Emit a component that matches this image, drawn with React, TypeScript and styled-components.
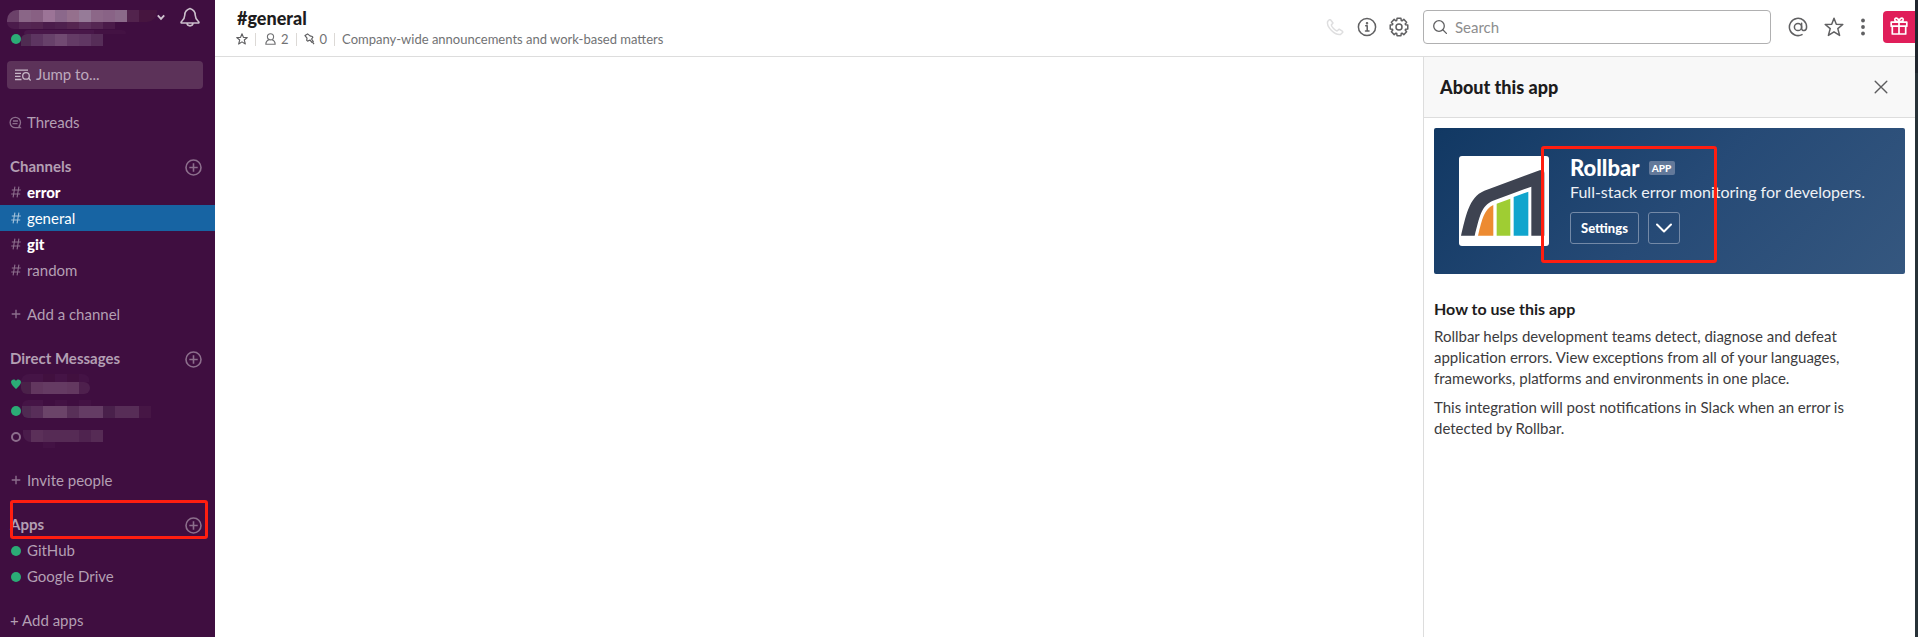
import React from "react";
import styled, { createGlobalStyle, css } from "styled-components";

const GlobalStyle = createGlobalStyle`
  *, *::before, *::after { box-sizing: border-box; }
  body {
    margin: 0;
    font-family: Lato, "Liberation Sans", sans-serif;
    font-size: 15px;
    color: #1d1c1d;
    background: #fff;
    overflow: hidden;
  }
  svg { display: block; flex: none; }
  h1, h2, h3, p { margin: 0; }
  button { font-family: inherit; margin: 0; padding: 0; background: none; border: 0; }
`;

const Page = styled.div`
  display: grid;
  grid-template-columns: 215px 1fr 3px;
  height: 637px;
  width: 1918px;
`;

/* ---------- sidebar ---------- */

const Sidebar = styled.aside`
  position: relative;
  background: #3f0e40;
  color: #b39fb3;
  overflow: hidden;
`;

const TeamHeader = styled.div`
  display: flex;
  height: 61px;
  padding: 7px 0 0 7px;
`;

const TeamText = styled.div`
  width: 150px;
  padding-top: 3px;
`;

const UserLine = styled.div`
  display: flex;
  padding-left: 4px;
`;

const BellIcon = styled.svg`
  margin-left: 15px;
`;

const Chevron = styled.svg`
  margin-top: 7px;
`;

const Mosaic = styled.div<{ $round?: string; $h: number; $indent: number }>`
  display: flex;
  height: ${(p) => p.$h}px;
  margin-left: ${(p) => p.$indent}px;
  border-radius: ${(p) => p.$round ?? "0"};
  overflow: hidden;
`;

const Cell = styled.span<{ $w: number; $c: string }>`
  width: ${(p) => p.$w}px;
  background: ${(p) => p.$c};
  flex: none;
`;

const MosaicStack = styled.div<{ $top: number }>`
  align-self: flex-start;
  margin-top: ${(p) => p.$top}px;
`;

const JumpTo = styled.div`
  display: flex;
  align-items: center;
  gap: 5px;
  width: 196px;
  height: 28px;
  margin-left: 7px;
  padding-left: 8px;
  border-radius: 4px;
  background: #5c3259;
  color: #bda9bd;
  line-height: 26px;
`;

const JumpLabel = styled.span`
  height: 28px;
`;

const Sections = styled.nav`
  display: flex;
  flex-direction: column;
  gap: 18px;
  padding-top: 20px;
`;

const Row = styled.div<{ $active?: boolean; $unread?: boolean }>`
  display: flex;
  align-items: center;
  height: 26px;
  padding: 0 13px 0 10px;
  line-height: 26px;
  white-space: pre;
  ${(p) => p.$active && css`background: #1764a3; color: #fff;`}
  ${(p) => p.$unread && css`color: #fff; font-weight: 900;`}
`;

const Prefix = styled.span<{ $active?: boolean; $w?: number }>`
  display: flex;
  flex: none;
  align-items: center;
  width: ${(p) => p.$w ?? 17}px;
  padding-left: 1px;
  color: ${(p) => (p.$active ? "#a2c1da" : "#8c6e8c")};
`;

const ThreadsIcon = styled.svg`
  margin-left: -2px;
`;

const SectionTitle = styled.span`
  flex: 1;
  font-weight: 700;
`;

const PlusIcon = styled.svg`
  margin-top: 3px;
`;

const Dot = styled.span<{ $away?: boolean; $top?: number }>`
  flex: none;
  width: 10px;
  height: 10px;
  margin-top: ${(p) => p.$top ?? 2}px;
  border-radius: 50%;
  ${(p) => (p.$away ? css`border: 2px solid #8c6e8c;` : css`background: #2bac76;`)}
`;

const Highlight = styled.div<{ $x: number; $y: number; $w: number; $h: number }>`
  position: absolute;
  left: ${(p) => p.$x}px;
  top: ${(p) => p.$y}px;
  width: ${(p) => p.$w}px;
  height: ${(p) => p.$h}px;
  border: 3px solid #ff1e10;
  border-radius: 3px;
  pointer-events: none;
`;

/* ---------- main ---------- */

const Main = styled.main`
  display: flex;
  flex-direction: column;
  min-width: 0;
`;

const TopBar = styled.header`
  display: flex;
  height: 57px;
  border-bottom: 1px solid #dddddd;
`;

const ChannelInfo = styled.div`
  flex: 1;
  padding: 7px 0 0 22px;
`;

const ChannelName = styled.h1`
  font-size: 18px;
  font-weight: 900;
  line-height: 22px;
  height: 22px;
`;

const Meta = styled.div`
  display: flex;
  align-items: center;
  height: 20px;
  margin-left: -1px;
  font-size: 13px;
  color: #717274;
  line-height: 20px;
`;

const MetaItem = styled.span`
  display: flex;
  align-items: center;
  gap: 5px;
  & + & {
    margin-left: 7px;
    padding-left: 8px;
    background: linear-gradient(#dcd9d6, #dcd9d6) left center / 1px 13px no-repeat;
  }
  &:nth-child(2) { padding-left: 9px; }
`;

const ToolGroup = styled.div<{ $gap: number; $right: number }>`
  display: flex;
  align-items: center;
  height: 54px;
  gap: ${(p) => p.$gap}px;
  margin-right: ${(p) => p.$right}px;
`;

const SearchBox = styled.div`
  display: flex;
  align-items: center;
  gap: 8px;
  width: 348px;
  height: 34px;
  margin: 10px 17px 0 0;
  padding-left: 9px;
  border: 1px solid #b0b0b1;
  border-radius: 4px;
  color: #8d8d8e;
`;

const GiftButton = styled.button`
  display: flex;
  align-items: center;
  justify-content: center;
  width: 32px;
  height: 32px;
  margin-top: 11px;
  padding-bottom: 2px;
  border-radius: 4px 0 0 4px;
  background: #e01e5a;
`;

const Content = styled.div`
  display: flex;
  flex: 1;
`;

const Messages = styled.section`
  flex: 1;
`;

const Panel = styled.aside`
  width: 492px;
  border-left: 1px solid #dddddd;
`;

const PanelHeader = styled.div`
  display: flex;
  align-items: center;
  justify-content: space-between;
  height: 61px;
  padding: 0 27px 0 16px;
  background: #f8f8f8;
  border-bottom: 1px solid #dddddd;
`;

const PanelTitle = styled.h2`
  font-size: 18px;
  font-weight: 900;
  line-height: 24px;
`;

const AppCard = styled.div`
  position: relative;
  display: flex;
  width: 471px;
  height: 146px;
  margin: 10px 0 0 10px;
  padding: 28px 0 0 25px;
  border-radius: 2px;
  background: linear-gradient(135deg, #113863 0%, #264a76 52%, #35577f 100%);
  color: #fff;
`;

const AppLogo = styled.svg`
  border-radius: 3px;
`;

const AppInfo = styled.div`
  margin: -1px 0 0 21px;
`;

const AppNameRow = styled.div`
  display: flex;
  align-items: center;
  height: 25px;
  gap: 9px;
`;

const AppName = styled.h3`
  font-size: 22px;
  font-weight: 900;
  line-height: 25px;
`;

const Badge = styled.span`
  width: 26px;
  height: 14px;
  border-radius: 2px;
  background: #63799a;
  font-size: 10px;
  font-weight: 900;
  line-height: 15px;
  text-align: center;
`;

const Tagline = styled.p`
  height: 24px;
  font-size: 16px;
  line-height: 24px;
  white-space: nowrap;
  color: #eef1f5;
`;

const Actions = styled.div`
  display: flex;
  gap: 9px;
  margin-top: 8px;
`;

const OutlineButton = styled.button<{ $w: number }>`
  display: flex;
  align-items: center;
  justify-content: center;
  width: ${(p) => p.$w}px;
  height: 32px;
  border: 1px solid #7389a7;
  border-radius: 3px;
  color: #fff;
  font-size: 13px;
  font-weight: 900;
`;

const HowTo = styled.div`
  padding: 23px 0 0 10px;
`;

const HowToTitle = styled.h3`
  font-size: 16px;
  font-weight: 700;
  line-height: 24px;
`;

const Paragraph = styled.p`
  margin-top: 5px;
  margin-bottom: 8px;
  line-height: 21px;
  color: #3c3b3d;
  white-space: nowrap;
  & + & { margin-top: 0; }
`;

const Edge = styled.div`
  background: linear-gradient(#20262e 73px, #283238 73px);
`;

/* ---------- shared pieces ---------- */

const ToolIcon = ({ size = 20, color = "#606062", w = 1.5, children }: { size?: number; color?: string; w?: number; children: React.ReactNode }) => (
  <svg width={size} height={size} viewBox="0 0 20 20" fill="none" stroke={color} strokeWidth={w} strokeLinejoin="round" strokeLinecap="round">
    {children}
  </svg>
);

const starPath = "M10 1.300 12.300 7.200 18.800 7.500 13.800 11.600 15.600 18.400 10 14.800 4.400 18.400 6.200 11.600 1.200 7.500 7.700 7.200Z";

const gearPath = (() => {
  const points: string[] = [];
  for (let i = 0; i < 8; i++) {
    const a = (i * Math.PI) / 4;
    [[-0.22, 9], [0.22, 9], [0.33, 6.9], [0.455, 6.9]].forEach(([d, r]) => {
      points.push(`${(10 + r * Math.sin(a + d)).toFixed(2)} ${(10 - r * Math.cos(a + d)).toFixed(2)}`);
    });
  }
  return `M${points.join("L")}Z`;
})();

const SmallPlus = () => (
  <svg width="10" height="10" viewBox="0 0 10 10" stroke="#8c6e8c" strokeWidth="1.4">
    <path d="M5 .7v8.600M.7 5h8.600" />
  </svg>
);

type Cells = [number, string][];

const Redacted = ({ cells, round, h = 12, indent = 0 }: { cells: Cells; round?: string; h?: number; indent?: number }) => (
  <Mosaic $round={round} $h={h} $indent={indent}>
    {cells.map(([w, c], i) => (
      <Cell key={i} $w={w} $c={c} />
    ))}
  </Mosaic>
);

const ChannelRow = ({ name, active, unread }: { name: string; active?: boolean; unread?: boolean }) => (
  <Row $active={active} $unread={unread}>
    <Prefix $active={active}>
      <svg width="10" height="12" viewBox="0 0 10 12" fill="none" stroke="currentColor" strokeWidth="1.100">
        <path d="M3.900.7 2.100 11.300M7.900.7 6.100 11.300M.8 4h9M.2 8h9" />
      </svg>
    </Prefix>
    {name}
  </Row>
);

const Section = ({ title }: { title: string }) => (
  <Row>
    <SectionTitle>{title}</SectionTitle>
    <PlusIcon width="17" height="17" viewBox="0 0 17 17" fill="none" stroke="#8c6e8c" strokeWidth="1.6">
      <circle cx="8.500" cy="8.500" r="7.500" />
      <path d="M8.500 4.300v8.400M4.300 8.500h8.400" />
    </PlusIcon>
  </Row>
);

export default function App() {
  return (
    <>
      <GlobalStyle />
      <Page>
        <Sidebar>
          <TeamHeader>
            <TeamText>
              <Redacted
                round="10px 0 10px 0"
                cells={[[12, "#6b4169"], [12, "#8a6687"], [12, "#886083"], [12, "#9c7497"], [12, "#8b688b"], [12, "#95708d"], [12, "#967b98"], [12, "#8c6788"], [12, "#896386"], [12, "#8b6a8a"], [12, "#52234d"], [18, "#46153f"]]}
              />
              <Redacted
                h={7}
                round="0 0 8px 12px"
                cells={[[12, "#4b1b4b"], [12, "#542653"], [12, "#532450"], [12, "#4b1c4b"], [12, "#4e204e"], [12, "#552550"], [12, "#5c2f5b"], [12, "#552753"], [12, "#4a1a49"]]}
              />
              <UserLine>
                <Dot $top={5} />
                <MosaicStack $top={1}>
                  <Redacted h={4} indent={3} round="6px 6px 0 0" cells={[[70, "#481749"], [32, "#431243"]]} />
                  <Redacted round="6px 0 0 0" cells={[[10, "#4f2b52"], [12, "#5d3561"], [12, "#67416a"], [12, "#714a72"], [12, "#643b66"], [12, "#603763"], [12, "#562d58"]]} />
                </MosaicStack>
              </UserLine>
            </TeamText>
            <Chevron width="8" height="7" viewBox="0 0 8 7" fill="none" stroke="#cfc3cf" strokeWidth="1.900">
              <path d="M.8 1.300 4 4.800 7.200 1.300" />
            </Chevron>
            <BellIcon width="20" height="20" viewBox="0 0 20 20" fill="none" stroke="#cbbfcb" strokeWidth="1.600" strokeLinejoin="round">
              <path d="M10 1.500C7.500 2.300 4.800 4 4.800 8c0 3.600-1 4.400-3.500 6.800-.5.500-.2 1.200.5 1.200h16.400c.7 0 1-.7.5-1.200C16.200 12.400 15.200 11.600 15.200 8c0-4-2.700-5.700-5.200-6.500zM7 16.300c.3 3.400 5.700 3.400 6 0" />
            </BellIcon>
          </TeamHeader>
          <JumpTo>
            <svg width="16" height="12" viewBox="0 0 16 12" fill="none" stroke="#c8b8c8" strokeWidth="1.300">
              <path d="M0 1.200h13M0 4.300h6M0 7.400h5.500M0 10.500h6.500M13.500 9 15.600 11.500" />
              <circle cx="11" cy="6.900" r="3.300" />
            </svg>
            <JumpLabel>Jump to...</JumpLabel>
          </JumpTo>
          <Sections>
            <Row>
              <Prefix>
                <ThreadsIcon width="13" height="13" viewBox="0 0 13 13" fill="none" stroke="#8c6e8c" strokeWidth="1.300">
                  <path d="M11.300 11.700H6.300A5.200 5.200 0 1 1 11.500 6.500c0 1.700-.5 2.600-1.500 3.700zM4 5h5M3.500 7.700h5" />
                </ThreadsIcon>
              </Prefix>
              Threads
            </Row>
            <div>
              <Section title="Channels" />
              <ChannelRow name="error" unread />
              <ChannelRow name="general" active />
              <ChannelRow name="git" unread />
              <ChannelRow name="random" />
            </div>
            <Row><Prefix><SmallPlus /></Prefix>Add a channel</Row>
            <div>
              <Section title="Direct Messages" />
              <Row>
                <Prefix $w={11}>
                  <svg width="10" height="10" viewBox="0 0 10 10" fill="#2bac76">
                    <path d="M5 10C2.500 7.800 0 5.700 0 3.100 0 .2 3.800-.4 5 1.900 6.200-.4 10 .2 10 3.100 10 5.700 7.500 7.800 5 10z" />
                  </svg>
                </Prefix>
                <MosaicStack $top={3}>
                  <Redacted h={8} round="10px 10px 0 0" cells={[[22, "#451446"], [12, "#41103f"], [12, "#451446"], [12, "#41103f"], [10, "#441345"]]} />
                  <Redacted round="0 6px 6px 6px" cells={[[10, "#4a2149"], [12, "#62375f"], [24, "#653b63"], [12, "#633860"], [11, "#4e204d"]]} />
                </MosaicStack>
              </Row>
              <Row>
                <Prefix $w={12}><Dot /></Prefix>
                <MosaicStack $top={3}>
                  <Redacted h={6} round="6px 0 0 0" cells={[[21, "#451446"], [12, "#3f0e40"], [12, "#431244"], [12, "#3f0e40"], [12, "#431244"]]} />
                  <Redacted round="0 0 0 6px" cells={[[9, "#4f2a52"], [12, "#582e59"], [24, "#6b4469"], [12, "#583058"], [24, "#643c64"], [12, "#49204b"], [24, "#572d57"], [12, "#461645"]]} />
                </MosaicStack>
              </Row>
              <Row>
                <Prefix $w={13}><Dot $away /></Prefix>
                <MosaicStack $top={7}>
                  <Redacted round="0 0 0 8px" cells={[[8, "#4a1c4b"], [12, "#5b3059"], [36, "#562b55"], [12, "#4f234f"], [12, "#562b55"]]} />
                  <Redacted h={6} indent={20} cells={[[12, "#431244"]]} />
                </MosaicStack>
              </Row>
            </div>
            <Row><Prefix><SmallPlus /></Prefix>Invite people</Row>
            <div>
              <Section title="Apps" />
              <Row><Prefix><Dot /></Prefix>GitHub</Row>
              <Row><Prefix><Dot /></Prefix>Google Drive</Row>
            </div>
            <Row>+ Add apps</Row>
          </Sections>
          <Highlight $x={10} $y={500} $w={198} $h={39} />
        </Sidebar>
        <Main>
          <TopBar>
            <ChannelInfo>
              <ChannelName>#general</ChannelName>
              <Meta>
                <MetaItem>
                  <ToolIcon size={12} w={1.9}><path d={starPath} /></ToolIcon>
                </MetaItem>
                <MetaItem>
                  <svg width="12" height="12" viewBox="0 0 12 12" fill="none" stroke="#717274" strokeWidth="1.100" strokeLinejoin="round">
                    <circle cx="6.500" cy="3.800" r="3.100" />
                    <path d="M4.800 6.800C2.800 7.600 1.800 9 1.800 11.300h9.400C11.200 9 10.200 7.600 8.200 6.800" />
                  </svg>
                  <span>2</span>
                </MetaItem>
                <MetaItem>
                  <svg width="11" height="12" viewBox="0 0 11 12" fill="none" stroke="#606062" strokeWidth="1.200" strokeLinejoin="round">
                    <path d="M3.600.9 6 2.900 8.300 3.500 8.800 4.400 7.600 6 9.300 8.500 7.900 9.300 6 7 3.600 8.100 2.700 7.400 3 5.200 1 2.600ZM8.400 8.900 10 11.200" />
                  </svg>
                  <span>0</span>
                </MetaItem>
                <MetaItem>Company-wide announcements and work-based matters</MetaItem>
              </Meta>
            </ChannelInfo>
            <ToolGroup $gap={12} $right={14}>
              <ToolIcon color="#dededf">
                <path d="M4.300 2.800 2.600 4.500C1.200 9.500 9.500 18.500 15.500 17.500L17.800 15.300 17.600 14.300 14.200 12.200 12 14C10 13.500 6.600 10 6.300 8L8 6 5.500 2.800Z" />
              </ToolIcon>
              <ToolIcon>
                <circle cx="10" cy="10" r="8.600" />
                <path d="M8.700 8.700H10.200V14M8.500 14H12" />
                <circle cx="10" cy="6.200" r=".5" fill="#606062" />
              </ToolIcon>
              <ToolIcon>
                <path d={gearPath} />
                <circle cx="10" cy="10" r="3" />
              </ToolIcon>
            </ToolGroup>
            <SearchBox>
              <svg width="14" height="14" viewBox="0 0 14 14" fill="none" stroke="#606062" strokeWidth="1.300" strokeLinecap="round">
                <circle cx="6" cy="6" r="5.300" />
                <path d="M9.800 9.800 13.400 13.400" />
              </svg>
              Search
            </SearchBox>
            <ToolGroup $gap={16} $right={17}>
              <ToolIcon>
                <circle cx="10" cy="10" r="3.600" />
                <path d="M13.600 6.300V11.300C13.600 14.400 18.600 14.600 18.600 10A8.600 8.600 0 1 0 14 17.600" />
              </ToolIcon>
              <ToolIcon><path d={starPath} /></ToolIcon>
              <svg width="6" height="18" viewBox="-1 0 6 18" fill="#606062">
                <circle cx="2" cy="2.500" r="1.900" />
                <circle cx="2" cy="9" r="1.900" />
                <circle cx="2" cy="15.500" r="1.900" />
              </svg>
            </ToolGroup>
            <GiftButton>
              <svg width="18" height="18" viewBox="0 0 18 18" fill="none" stroke="#fff" strokeWidth="1.700" strokeLinejoin="round">
                <path d="M1.200 5.200H16.800V9.200H1.200ZM2.300 9.200H15.700V17H2.300ZM9 5.200V17M9 5C7.500 4.800 4.500 4.500 4.800 2.500 5.200.3 8.500.5 9 5 9.500.5 12.800.3 13.200 2.500 13.500 4.500 10.500 4.800 9 5" />
              </svg>
            </GiftButton>
          </TopBar>
          <Content>
            <Messages />
            <Panel>
              <PanelHeader>
                <PanelTitle>About this app</PanelTitle>
                <svg width="14" height="14" viewBox="0 0 14 14" stroke="#5c5c5e" strokeWidth="1.400" strokeLinecap="round">
                  <path d="M1.200 1.200 12.800 12.800M12.800 1.200 1.200 12.800" />
                </svg>
              </PanelHeader>
              <AppCard>
                <AppLogo width="90" height="90" viewBox="0 0 270 270">
                  <rect width="270" height="270" fill="#fff" />
                  <path fill="#3e4351" d="M6 239C20 184 28 124 76 104L242 43Q256 39 256 52V239H217V92L102 134C66 149 62 182 47 239Z" />
                  <path fill="#ed8b31" d="M57 239C68 192 76 158 103 147V239Z" />
                  <path fill="#9fcd33" d="M113 143 154 128V239H113Z" />
                  <path fill="#10a5cd" d="M164 123 208 107V239H164Z" />
                </AppLogo>
                <AppInfo>
                  <AppNameRow><AppName>Rollbar</AppName><Badge>APP</Badge></AppNameRow>
                  <Tagline>Full-stack error monitoring for developers.</Tagline>
                  <Actions>
                    <OutlineButton $w={69}>Settings</OutlineButton>
                    <OutlineButton $w={32}>
                      <svg width="16" height="10" viewBox="0 0 16 10" fill="none" stroke="#fff" strokeWidth="2" strokeLinecap="round" strokeLinejoin="round">
                        <path d="M1 1.500 8 8.500 15 1.500" />
                      </svg>
                    </OutlineButton>
                  </Actions>
                </AppInfo>
                <Highlight $x={107} $y={18} $w={176} $h={117} />
              </AppCard>
              <HowTo>
                <HowToTitle>How to use this app</HowToTitle>
                <Paragraph>
                  Rollbar helps development teams detect, diagnose and defeat<br />
                  application errors. View exceptions from all of your languages,<br />
                  frameworks, platforms and environments in one place.
                </Paragraph>
                <Paragraph>
                  This integration will post notifications in Slack when an error is<br />
                  detected by Rollbar.
                </Paragraph>
              </HowTo>
            </Panel>
          </Content>
        </Main>
        <Edge />
      </Page>
    </>
  );
}
